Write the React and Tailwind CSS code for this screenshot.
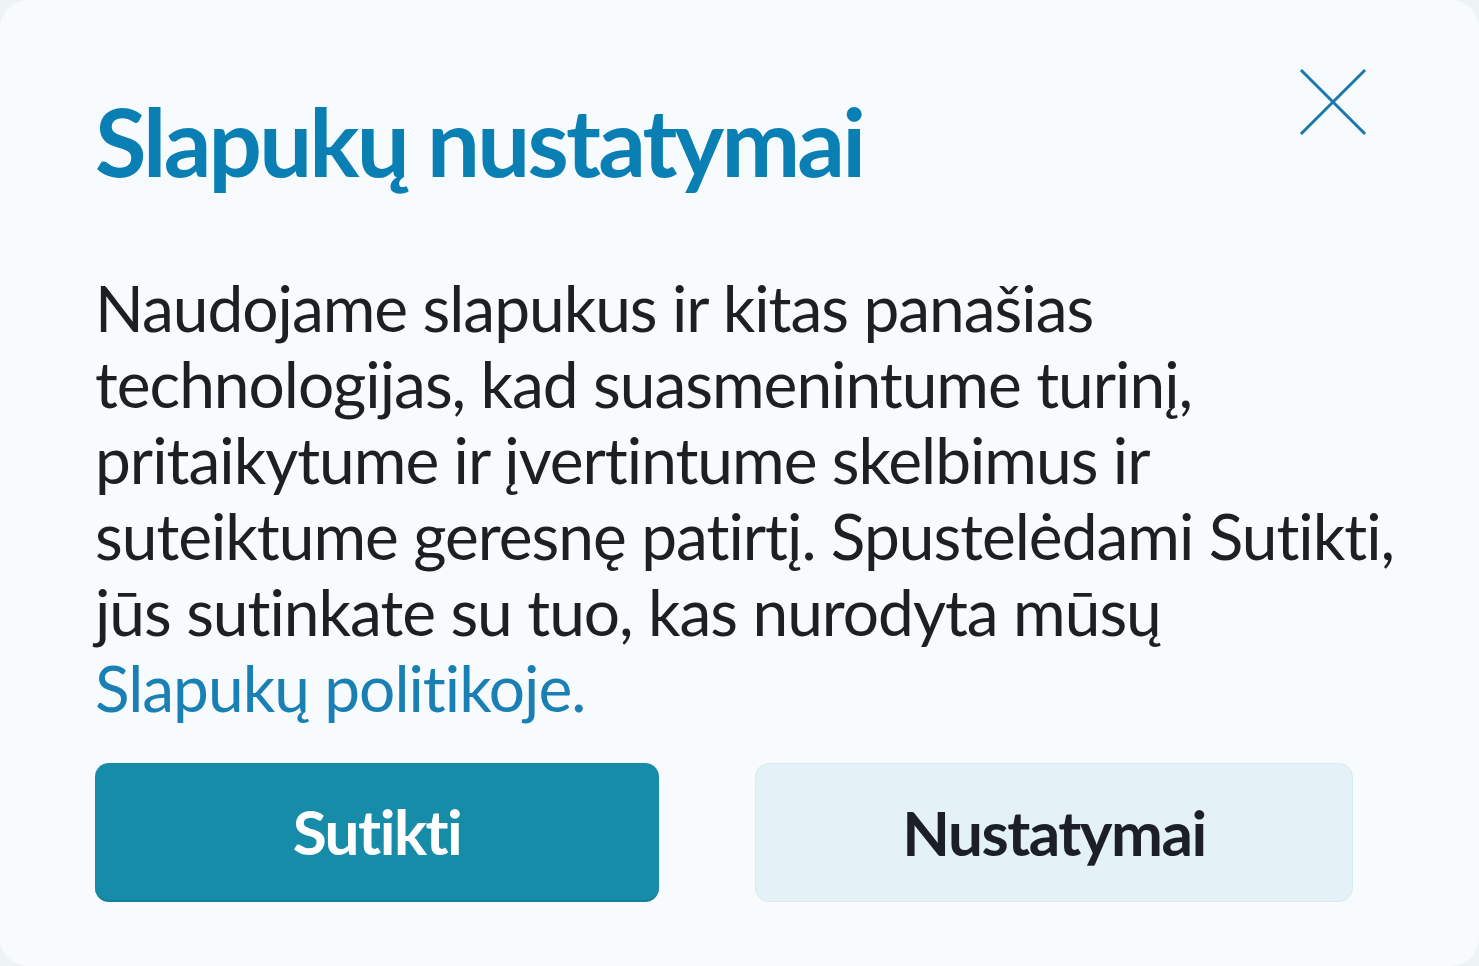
export default function App() {
  return (
    <div className="min-h-screen w-full bg-[#eef3f6] font-['Lato',sans-serif]">
      <div className="relative h-[966px] w-full rounded-[28px] bg-[#f8fbfd] px-[95px] pt-[86px]">
        {/* close */}
        <button className="absolute right-[108px] top-[64px] text-[#1a78ad]">
          <svg width="76" height="76" viewBox="0 0 76 76" fill="none" stroke="currentColor" strokeWidth="3" strokeLinecap="square">
            <line x1="7" y1="7" x2="69" y2="69" />
            <line x1="69" y1="7" x2="7" y2="69" />
          </svg>
        </button>

        <h1 className="whitespace-nowrap text-[94px] font-bold leading-[110px] tracking-[-2.8px] text-[#0a7fb3]">Slapukų nustatymai</h1>

        <p className="mt-[74px] whitespace-nowrap text-[64px] leading-[76px] tracking-[-1px] text-[#1d1f23]">
          Naudojame slapukus ir kitas panašias<br />
          technologijas, kad suasmenintume turinį,<br />
          pritaikytume ir įvertintume skelbimus ir<br />
          suteiktume geresnę patirtį. Spustelėdami Sutikti,<br />
          jūs sutinkate su tuo, kas nurodyta mūsų<br />
          <a href="#" className="text-[#1a80b4]">Slapukų politikoje.</a>
        </p>

        <div className="mt-[37px] flex gap-[96px]">
          <button className="flex h-[139px] w-[564px] items-center justify-center rounded-[14px] border-b-2 border-[#137d98] bg-[#178ca9] text-[62px] font-bold tracking-[-1.5px] text-white">
            Sutikti
          </button>
          <button className="flex h-[139px] w-[598px] items-center justify-center rounded-[14px] border border-[#d8e9f1] bg-[#e4f1f7] text-[62px] font-bold tracking-[-1.5px] text-[#1d1f26]">
            Nustatymai
          </button>
        </div>
      </div>
    </div>
  );
}
